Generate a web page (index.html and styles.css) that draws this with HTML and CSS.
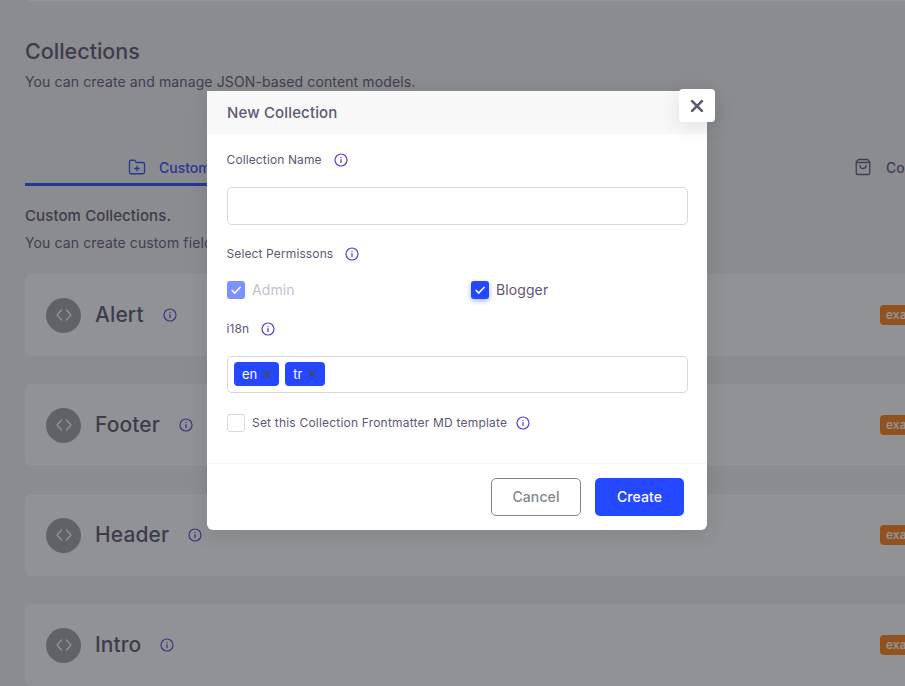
FILE: index.html
```html
<!DOCTYPE html>
<html lang="en">
<head>
<meta charset="utf-8">
<title>Collections</title>
<link rel="stylesheet" href="styles.css">
</head>
<body>
<svg class="sprite" width="0" height="0" aria-hidden="true">
  <symbol id="info" viewBox="0 0 14 14"><circle cx="7" cy="7" r="6" fill="none" stroke="currentColor" stroke-width="1.2"/><path d="M7 6.600v3M7 4.300v.2" fill="none" stroke="currentColor" stroke-width="1.300" stroke-linecap="round"/></symbol>
  <symbol id="check" viewBox="0 0 18 18"><path d="M5 9.300l2.800 2.800L13.200 6.200" fill="none" stroke="#fff" stroke-width="1.500" stroke-linecap="round" stroke-linejoin="round"/></symbol>
  <symbol id="code" viewBox="0 0 18 18"><path d="M6.500 4L2 9l4.500 5M11.500 4L16 9l-4.500 5" fill="none" stroke="currentColor" stroke-width="1.200" stroke-linecap="round" stroke-linejoin="round"/></symbol>
  <symbol id="x" viewBox="0 0 10 10"><path d="M1.500 1.500l7 7M8.500 1.500l-7 7" fill="none" stroke="currentColor" stroke-width="1.900" stroke-linecap="round"/></symbol>
</svg>

<main class="page">
  <div class="top-card"></div>
  <h1 class="title">Collections</h1>
  <p class="subtitle">You can create and manage JSON-based content models.</p>

  <nav class="tabs">
    <div class="tab tab-active">
      <svg class="tab-icon" viewBox="0 0 18 18"><path d="M16.500 14.250a1.500 1.500 0 0 1-1.500 1.500H3a1.500 1.500 0 0 1-1.500-1.500V3.750A1.500 1.500 0 0 1 3 2.250h3.750l1.500 2.250H15a1.500 1.500 0 0 1 1.500 1.500zM9 8.250v4.500M6.750 10.500h4.500" fill="none" stroke="currentColor" stroke-width="1.300" stroke-linecap="round" stroke-linejoin="round"/></svg>
      <span>Custom Collections</span>
    </div>
    <div class="tab tab-other">
      <svg class="tab-icon" viewBox="0 0 18 18"><path d="M4.500 1.500L2.250 3.750v11.500a1.300 1.300 0 0 0 1.300 1.250h10.900a1.300 1.300 0 0 0 1.300-1.250V3.750L13.500 1.500zM2.250 4.500h13.500M12 7.500a3 3 0 0 1-6 0" fill="none" stroke="currentColor" stroke-width="1.300" stroke-linecap="round" stroke-linejoin="round"/></svg>
      <span>Core Collections</span>
    </div>
  </nav>

  <h2 class="section-title">Custom Collections.</h2>
  <p class="section-text">You can create custom fields and manage your content.</p>

  <section class="cards">
    <article class="card">
      <span class="avatar"><svg class="avatar-icon"><use href="#code"/></svg></span>
      <span class="card-name">Alert</span>
      <svg class="info info-card"><use href="#info"/></svg>
      <span class="badge">example</span>
    </article>
    <article class="card">
      <span class="avatar"><svg class="avatar-icon"><use href="#code"/></svg></span>
      <span class="card-name">Footer</span>
      <svg class="info info-card"><use href="#info"/></svg>
      <span class="badge">example</span>
    </article>
    <article class="card">
      <span class="avatar"><svg class="avatar-icon"><use href="#code"/></svg></span>
      <span class="card-name">Header</span>
      <svg class="info info-card"><use href="#info"/></svg>
      <span class="badge">example</span>
    </article>
    <article class="card">
      <span class="avatar"><svg class="avatar-icon"><use href="#code"/></svg></span>
      <span class="card-name">Intro</span>
      <svg class="info info-card"><use href="#info"/></svg>
      <span class="badge">example</span>
    </article>
  </section>
</main>

<div class="overlay"></div>

<div class="modal">
  <button class="close" type="button" aria-label="Close"><svg class="close-icon"><use href="#x"/></svg></button>
  <header class="modal-head">New Collection</header>
  <div class="modal-body">
    <div class="label label-first">Collection Name<svg class="info"><use href="#info"/></svg></div>
    <div class="input"></div>
    <div class="label label-perm">Select Permissons<svg class="info"><use href="#info"/></svg></div>
    <div class="perm-grid">
      <label class="check check-disabled"><span class="box box-on box-faded"><svg class="tick"><use href="#check"/></svg></span>Admin</label>
      <label class="check"><span class="box box-on box-glow"><svg class="tick"><use href="#check"/></svg></span>Blogger</label>
    </div>
    <div class="label label-i18n">i18n<svg class="info"><use href="#info"/></svg></div>
    <div class="input input-tags">
      <span class="tag">en<svg class="tag-x"><use href="#x"/></svg></span>
      <span class="tag tag-short">tr<svg class="tag-x"><use href="#x"/></svg></span>
    </div>
    <div class="check check-small"><span class="box"></span><span>Set this Collection Frontmatter MD template</span><svg class="info info-inline"><use href="#info"/></svg></div>
  </div>
  <footer class="modal-foot">
    <button class="btn btn-cancel" type="button">Cancel</button>
    <button class="btn btn-create" type="button">Create</button>
  </footer>
</div>
</body>
</html>
```
FILE: styles.css
```css
* { box-sizing: border-box; }
html, body { margin: 0; height: 100%; }
body {
  position: relative;
  width: 905px;
  height: 686px;
  overflow: hidden;
  background: #f1f3f2;
  color: #5e5873;
  font-family: Inter, "Liberation Sans", sans-serif;
}
.sprite { position: absolute; }
.page { width: 1200px; padding: 0 25px; }
.top-card { height: 2px; margin: 0 0 0 2px; background: #fff; border-radius: 0 0 6px 6px; }
.title { margin: 37px 0 0; font-size: 21.500px; line-height: 24px; font-weight: 500; color: #57526b; }
.subtitle { margin: 9px 0 0; font-size: 14px; line-height: 20px; letter-spacing: .12px; }
.tabs { display: flex; margin-top: 59px; height: 35px; }
.tab { display: flex; align-items: center; gap: 13px; height: 35px; font-size: 14px; font-weight: 500; }
.tab-active { width: 422px; padding-left: 103px; color: #2448ff; border-bottom: 3px solid #2448ff; }
.tab-other { margin-left: 407px; padding-bottom: 3px; gap: 14px; }
.tab-icon { width: 18px; height: 18px; flex: none; }
.section-title { margin: 20px 0 0; font-size: 15px; line-height: 20px; font-weight: 500; letter-spacing: .1px; color: #57526b; }
.section-text { margin: 7px 0 0; font-size: 14px; line-height: 20px; letter-spacing: .12px; }
.cards { display: flex; flex-direction: column; gap: 28px; margin-top: 21px; }
.card { display: flex; align-items: center; height: 82px; padding-left: 21px; background: #fff; border-radius: 6px; position: relative; }
.avatar { display: flex; align-items: center; justify-content: center; width: 35px; height: 35px; border-radius: 50%; background: #9ba0a4; color: #fff; flex: none; }
.avatar-icon { width: 18px; height: 18px; }
.card-name { margin-left: 14px; font-size: 21px; line-height: 24px; font-weight: 500; letter-spacing: .1px; color: #57526b; }
.info { display: inline-block; width: 14px; height: 14px; color: #5a3fd6; vertical-align: -3px; }
.info-card { margin-left: 19px; }
.badge { position: absolute; left: 855px; top: 31px; height: 20px; padding: 0 6px; border-radius: 4px; background: #ff7f11; color: #fff; font-size: 12px; line-height: 20px; font-weight: 600; }
.overlay { position: absolute; inset: 0; background: rgba(35, 37, 44, .5); }
.modal { position: absolute; left: 207px; top: 91px; width: 500px; height: 439px; background: #fff; border-radius: 0 0 6px 6px; box-shadow: 0 5px 20px rgba(34, 41, 47, .12); display: flex; flex-direction: column; }
.modal-head { height: 43px; padding: 0 20px; background: #f8f8f8; font-size: 15px; line-height: 43px; font-weight: 500; letter-spacing: .15px; }
.close { position: absolute; right: -8px; top: -2px; display: flex; align-items: center; justify-content: center; width: 36px; height: 33px; padding: 0; border: 0; border-radius: 4px; background: #fff; color: #5e5873; box-shadow: 0 5px 20px rgba(34, 41, 47, .1); }
.close-icon { width: 14px; height: 14px; }
.modal-body { flex: 1; padding: 0 19.500px; }
.label { font-size: 12px; line-height: 18px; letter-spacing: .12px; }
.label .info { margin-left: 12px; }
.label-first { margin-top: 17px; }
.label-perm { margin-top: 20px; }
.label-i18n { margin-top: 21px; }
.input { height: 38px; margin-top: 18px; border: 1px solid #d8d6de; border-radius: 5px; background: #fff; }
.input-tags { display: flex; align-items: center; gap: 6px; height: 37px; padding: 0 0 1px 6.500px; }
.tag { display: inline-flex; align-items: center; gap: 5px; height: 24px; padding: 0 7px 0 8px; border-radius: 4px; background: #2448ff; color: #fff; font-size: 13px; }
.tag-short { padding-right: 8px; }
.tag-x { width: 10px; height: 10px; color: #3c4a7e; }
.perm-grid { display: grid; grid-template-columns: 244px 1fr; margin-top: 18px; }
.check { display: flex; align-items: center; gap: 7.500px; font-size: 14px; line-height: 18px; letter-spacing: .1px; }
.check-disabled { color: #bcc3ce; }
.check-small { margin-top: 21px; font-size: 12px; letter-spacing: .2px; }
.box { display: block; width: 18px; height: 18px; border: 1px solid #d8d6de; border-radius: 3px; background: #fff; flex: none; }
.box-on { border: 0; background: #2448ff; }
.box-faded { background: #7b91ff; }
.box-glow { box-shadow: 0 2px 5px rgba(36, 72, 255, .4); }
.tick { display: block; width: 18px; height: 18px; }
.info-inline { margin-left: 1.500px; }
.modal-foot { display: flex; justify-content: flex-end; gap: 14px; height: 67px; padding: 14px 23px 0 0; border-top: 1px solid #f5f5f6; }
.btn { height: 38px; border-radius: 5px; font: 500 14px/1 Inter, "Liberation Sans", sans-serif; letter-spacing: .1px; }
.btn-cancel { width: 90px; background: #fff; border: 1px solid #82868b; color: #82868b; }
.btn-create { width: 89px; background: #2448ff; border: 0; color: #fff; }
```
